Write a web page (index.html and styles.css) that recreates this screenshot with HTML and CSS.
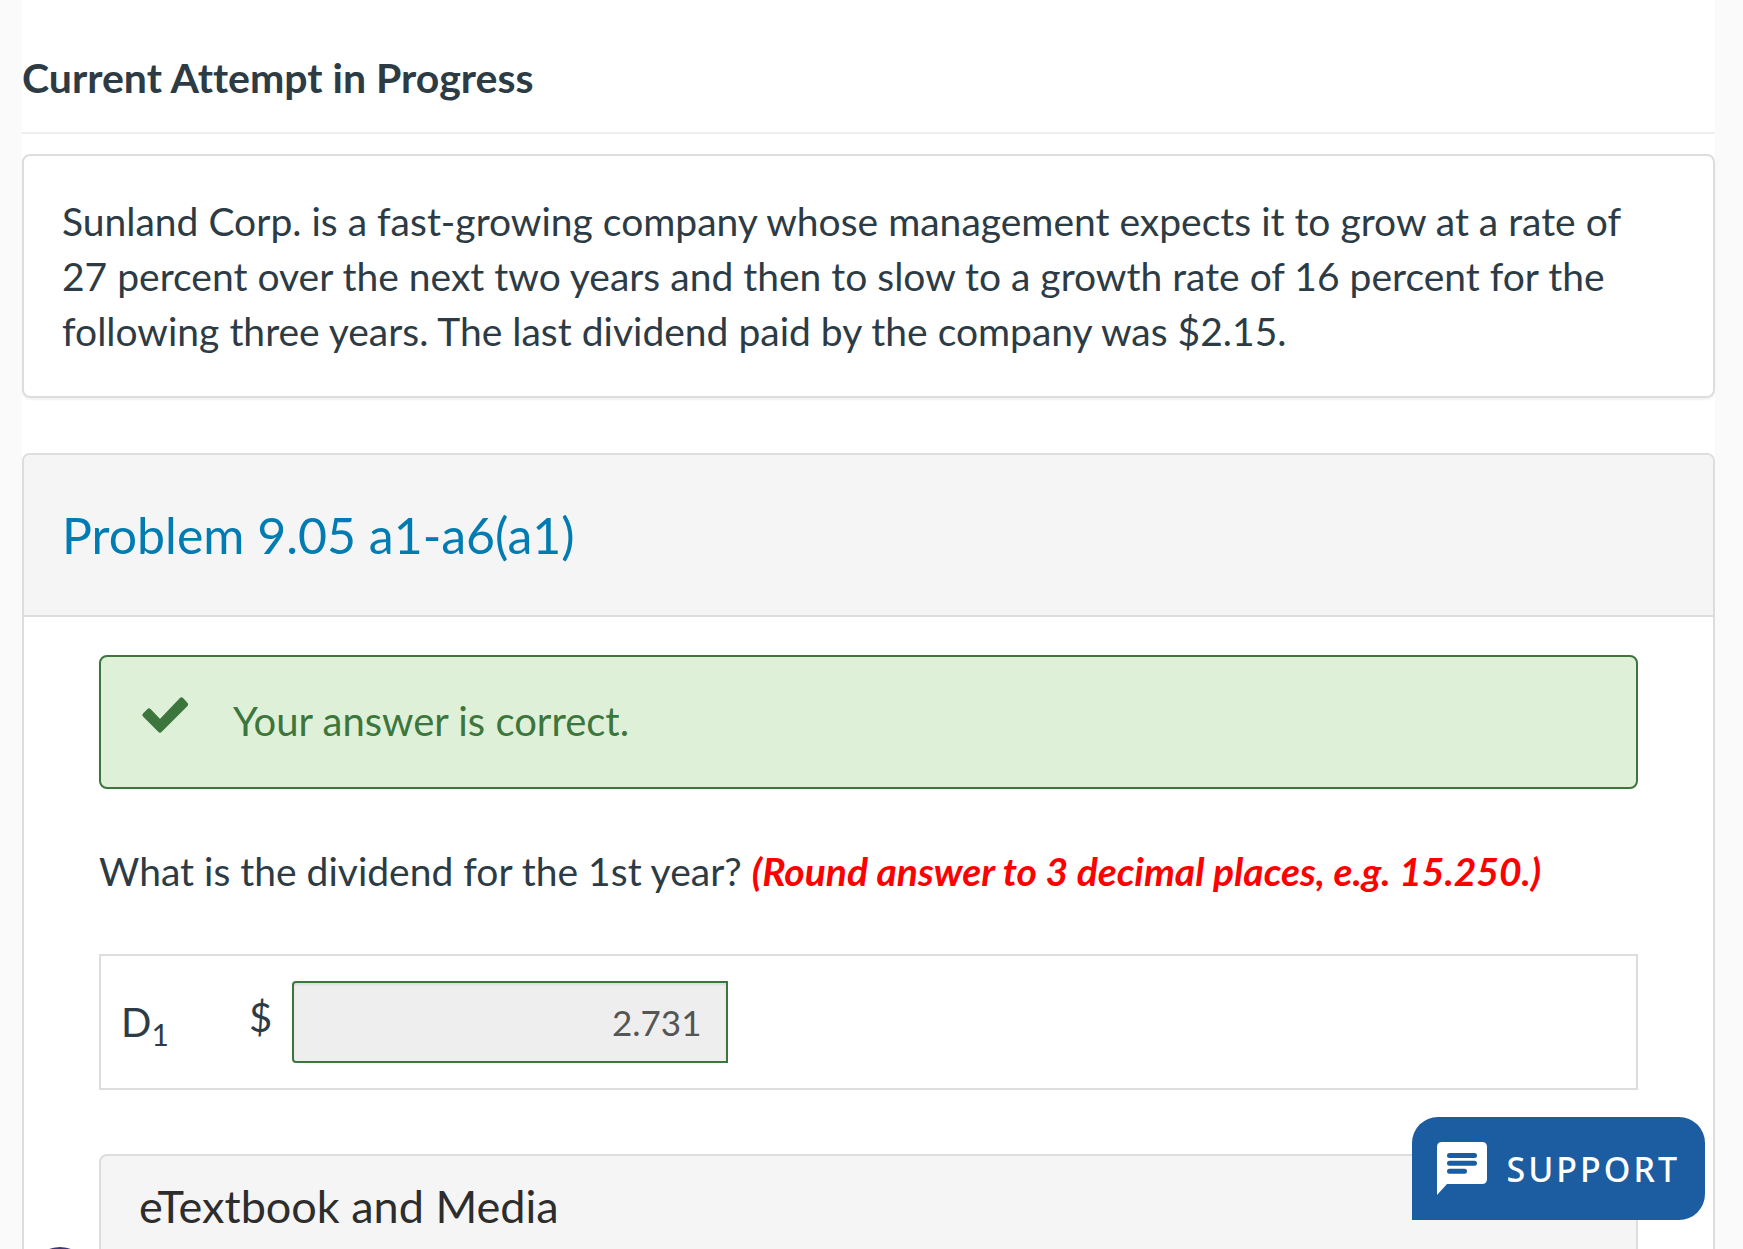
FILE: index.html
```html
<!DOCTYPE html>
<html lang="en">
<head>
  <meta charset="utf-8">
  <title>Problem 9.05</title>
  <link rel="stylesheet" href="styles.css">
</head>
<body>
  <main class="page">
    <h1 class="attempt">Current Attempt in Progress</h1>

    <div class="statement">
      <p>Sunland Corp. is a fast-growing company whose management expects it to grow at a rate of 27 percent over the next two years and then to slow to a growth rate of 16 percent for the following three years. The last dividend paid by the company was $2.15.</p>
    </div>

    <section class="panel">
      <h2 class="panel-title">Problem 9.05 a1-a6(a1)</h2>
      <div class="panel-body">
        <div class="alert">
          <svg class="check" viewBox="0 0 46 36" aria-hidden="true">
            <path d="M3 18 L7 14 L18 25.500 L39.500 3 L43.500 7.500 L18 33 Z" fill="#3c763d" stroke="#3c763d" stroke-width="5" stroke-linejoin="round"/>
          </svg>
          <span>Your answer is correct.</span>
        </div>

        <p class="question">What is the dividend for the 1st year? <em>(Round answer to 3 decimal places, e.g. 15.250.)</em></p>

        <table class="answers">
          <tr>
            <td class="name"><label for="d1">D<sub>1</sub></label></td>
            <td class="field">
              <span class="unit">$</span>
              <input id="d1" type="text" value="2.731" readonly>
            </td>
          </tr>
        </table>

        <button class="media" type="button">eTextbook and Media</button>
      </div>
    </section>
  </main>

  <div class="badge"></div>

  <button class="support" type="button">
    <svg viewBox="0 0 50 53" aria-hidden="true">
      <path d="M5 0 H45 Q50 0 50 5 V37 Q50 42 45 42 H10 L0 53 V5 Q0 0 5 0 Z" fill="#fff"/>
      <path d="M12.500 13.500 H37.500 M12.500 21.300 H37.500 M12.500 29.300 H27.500" stroke="#1c5ca0" stroke-width="5" stroke-linecap="round"/>
    </svg>
    <span>SUPPORT</span>
  </button>
</body>
</html>
```
FILE: styles.css
```css
* {
  box-sizing: border-box;
}

body {
  margin: 0;
  height: 100vh;
  overflow: hidden;
  background-color: #fafafa;
  font-family: Lato, sans-serif;
  font-size: 40px;
  font-variant-ligatures: none;
  line-height: 55px;
  color: #2d3b45;
}

p {
  margin: 0;
  font-size: 39px;
}

.page {
  margin: 0 28px 0 22px;
  background-color: #fff;
}

.attempt {
  margin: 0 0 20px;
  padding: 50px 0 27px;
  border-bottom: 2px solid #eee;
  font-size: 41px;
  font-weight: bold;
}

.statement {
  margin-bottom: 55px;
  padding: 38px 60px 37px 38px;
  border: 2px solid #ddd;
  border-radius: 8px;
  box-shadow: 0 2px 2px rgba(0, 0, 0, 0.05);
}

.panel {
  border: 2px solid #ddd;
  border-radius: 8px;
}

.panel-title {
  margin: 0;
  padding: 50px 38px;
  background-color: #f5f5f5;
  border-bottom: 2px solid #ddd;
  border-radius: 6px 6px 0 0;
  font-size: 50px;
  font-weight: normal;
  line-height: 60px;
  color: #007cb2;
}

.panel-body {
  padding: 38px 75px;
}

.alert {
  display: flex;
  align-items: center;
  gap: 45px;
  height: 134px;
  padding: 0 41px 2px;
  background-color: #dff0d8;
  border: 2px solid #3c763d;
  border-radius: 8px;
  color: #3c763d;
}

.check {
  width: 46px;
  height: 36px;
  margin-bottom: 12px;
}

.question {
  margin: 55px 0;
}

.question em {
  font-weight: bold;
  color: red;
}

.answers {
  width: 100%;
  height: 136px;
  border: 2px solid #ddd;
  border-spacing: 0;
}

.answers td {
  padding: 0;
}

.answers .name {
  width: 148px;
  padding-left: 20px;
}

.answers sub {
  font-size: 30px;
  line-height: 0;
}

.field {
  vertical-align: middle;
}

.unit {
  display: inline-block;
  margin-right: 10px;
}

.field input {
  width: 436px;
  height: 82px;
  padding: 0 25px;
  background-color: #eee;
  border: 2px solid #3c763d;
  border-radius: 4px 0 0 4px;
  box-shadow: inset 0 2px 2px rgba(0, 0, 0, 0.08);
  font-family: inherit;
  font-size: 35px;
  text-align: right;
  color: #555;
  vertical-align: middle;
}

.media {
  display: block;
  width: 100%;
  margin-top: 64px;
  padding: 20px 38px 60px;
  background-color: #f5f5f5;
  border: 2px solid #ddd;
  border-radius: 8px;
  font-family: inherit;
  font-size: 45px;
  line-height: 60px;
  text-align: left;
  color: #2d2d2d;
}

/* round launcher, peeks in from below */
.badge {
  position: fixed;
  left: 27px;
  bottom: -64px;
  width: 66px;
  height: 66px;
  background-color: #403577;
  border-radius: 50%;
}

.support {
  position: fixed;
  right: 38px;
  bottom: 29px;
  display: flex;
  align-items: center;
  gap: 19px;
  height: 103px;
  padding: 0 25px;
  background-color: #1c5ca0;
  border: 0;
  border-radius: 26px 26px 26px 0;
  font-family: "Noto Sans", sans-serif;
  font-size: 34px;
  font-weight: 500;
  letter-spacing: 3px;
  color: #fff;
}

.support svg {
  width: 50px;
  height: 53px;
}
```
